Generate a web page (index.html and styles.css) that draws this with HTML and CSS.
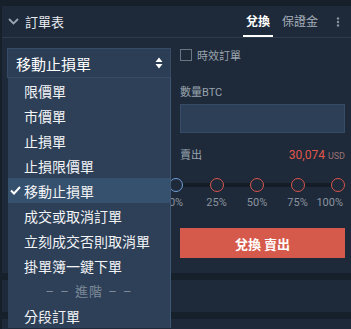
FILE: index.html
```html
<!DOCTYPE html>
<html lang="zh-Hant">
<head>
  <meta charset="UTF-8" />
  <meta name="viewport" content="width=device-width, initial-scale=1" />
  <title>訂單表</title>
  <link rel="stylesheet" href="styles.css">
</head>
<body>
  <div class="panel">
    <div class="panel-header">
      <div class="panel-title">
        <svg class="chevron" width="11" height="7" viewBox="0 0 11 7"><path d="M1 1l4.5 4.5L10 1" fill="none" stroke="#9aa5b1" stroke-width="1.8"/></svg>
        <span>訂單表</span>
      </div>
      <div class="tabs">
        <span class="tab active">兌換</span>
        <span class="tab">保證金</span>
        <svg class="more" width="4" height="10" viewBox="0 0 4 10"><circle cx="2" cy="1.5" r="1.2" fill="#8a949f"/><circle cx="2" cy="5" r="1.2" fill="#8a949f"/><circle cx="2" cy="8.5" r="1.2" fill="#8a949f"/></svg>
      </div>
    </div>

    <div class="order-body">
      <div class="col-left">
        <div class="select-box">
          <span>移動止損單</span>
          <svg width="8" height="12" viewBox="0 0 8 12"><path d="M4 0.5L7.5 5H0.5z M4 11.5L0.5 7H7.5z" fill="#fff"/></svg>
        </div>

        <!-- menú desplegado sobre el contenido -->
        <ul class="dropdown">
          <li>限價單</li>
          <li>市價單</li>
          <li>止損單</li>
          <li>止損限價單</li>
          <li class="selected">
            <svg class="check" width="11" height="9" viewBox="0 0 11 9"><path d="M1 4.5l3 3L10 1" fill="none" stroke="#fff" stroke-width="2"/></svg>
            移動止損單
          </li>
          <li>成交或取消訂單</li>
          <li>立刻成交否則取消單</li>
          <li>掛單簿一鍵下單</li>
          <li class="group">– – 進階 – –</li>
          <li>分段訂單</li>
        </ul>
      </div>

      <div class="col-right">
        <label class="check-row">
          <span class="checkbox"></span>
          <span>時效訂單</span>
        </label>

        <div class="field-label">數量BTC</div>
        <div class="input-box"></div>

        <div class="total-row">
          <span>賣出</span>
          <span class="price">30,074 <small>USD</small></span>
        </div>

        <div class="slider">
          <div class="track"></div>
          <div class="stops">
            <div class="stop first"><span class="dot"></span><span class="pct">0%</span></div>
            <div class="stop"><span class="dot"></span><span class="pct">25%</span></div>
            <div class="stop"><span class="dot"></span><span class="pct">50%</span></div>
            <div class="stop"><span class="dot"></span><span class="pct">75%</span></div>
            <div class="stop last"><span class="dot"></span><span class="pct">100%</span></div>
          </div>
        </div>

        <button type="button" class="sell-btn">兌換 賣出</button>
      </div>
    </div>

    <div class="band"></div>
    <div class="section"></div>
    <div class="band"></div>
    <div class="section last"></div>
  </div>
</body>
</html>
```

FILE: styles.css
```css
/* Reset básico */
* {
  box-sizing: border-box;
  margin: 0;
  padding: 0;
}

body {
  width: 351px;
  height: 329px;
  overflow: hidden;
  background: #16202b;
  padding: 6px 0 0 2px;
  font-family: Roboto, "Noto Sans CJK TC", sans-serif;
  color: #e8ebef;
}

.panel {
  background: #1e2a3a;
  height: 100%;
}

.panel-header {
  height: 32px;
  display: flex;
  align-items: center;
  justify-content: space-between;
  border-bottom: 1px solid #2e3b4c;
  padding: 0 11px 0 6px;
}

.panel-title {
  display: flex;
  align-items: center;
  gap: 6px;
  font-size: 13px;
}

.tabs {
  display: flex;
  align-items: center;
  height: 100%;
}

.tab {
  font-size: 12px;
  color: #a6afb9;
  height: 100%;
  display: flex;
  align-items: center;
  margin-left: 6px;
  padding: 0 3px;
  border-bottom: 2px solid transparent;
}

.tab.active {
  color: #fff;
  font-weight: 700;
  border-bottom-color: #fff;
}

.more {
  margin-left: 15px;
}

.order-body {
  display: flex;
  gap: 9px;
  padding: 10px 6px 0 5px;
  height: 235px;
}

.col-left {
  width: 164px;
  position: relative;
}

.select-box {
  height: 30px;
  background: #2c3e55;
  border: 1px solid #364b66;
  display: flex;
  align-items: center;
  justify-content: space-between;
  padding: 0 7px 0 8px;
  font-size: 15px;
  color: #fff;
}

.dropdown {
  position: absolute;
  top: 30px;
  left: 1px;
  width: 163px;
  list-style: none;
  background: #2e4058;
  border-right: 1px solid #3f5875;
  z-index: 2;
}

.dropdown li {
  height: 25px;
  display: flex;
  align-items: center;
  padding-left: 16px;
  font-size: 14px;
  color: #f2f4f6;
  position: relative;
}

.dropdown li.selected {
  background: #36516e;
}

.dropdown li.group {
  justify-content: center;
  padding-left: 0;
  color: #7d8a99;
  font-size: 13px;
  letter-spacing: 1px;
  word-spacing: 1px;
}

.check {
  position: absolute;
  left: 2px;
  top: 8px;
}

.col-right {
  flex: 1;
  display: flex;
  flex-direction: column;
}

.check-row {
  display: flex;
  align-items: center;
  gap: 5px;
  font-size: 11px;
  color: #9aa3ad;
  height: 13px;
}

.checkbox {
  width: 12px;
  height: 12px;
  border: 1px solid #6b7683;
}

.field-label {
  font-size: 11px;
  color: #9aa3ad;
  margin-top: 22px;
}

.input-box {
  height: 29px;
  margin-top: 5px;
  background: #2c3f57;
  border: 1px solid #364b66;
}

.total-row {
  display: flex;
  justify-content: space-between;
  align-items: baseline;
  margin-top: 13px;
  font-size: 11px;
  color: #9aa3ad;
}

.price {
  color: #e0574a;
  font-size: 12px;
}

.price small {
  font-size: 9px;
  color: #9a7272;
}

.slider {
  position: relative;
  margin: 16px 0 0 -11px;
}

.track {
  position: absolute;
  left: 0;
  right: 0;
  top: 5px;
  height: 4px;
  background: #141d27;
}

.stops {
  display: flex;
  justify-content: space-between;
  position: relative;
}

.stop {
  display: flex;
  flex-direction: column;
  align-items: center;
  width: 14px;
  gap: 4px;
}

.dot {
  width: 14px;
  height: 14px;
  border-radius: 50%;
  border: 1.5px solid #d9544a;
  background: #1e2a3a;
}

.stop.first .dot {
  border-color: #6f9fd8;
}

.pct {
  font-size: 11px;
  color: #8a939e;
  white-space: nowrap;
}

.stop.last .pct {
  align-self: flex-end;
  margin-right: 2px;
}

.sell-btn {
  margin-top: 19px;
  height: 30px;
  border: none;
  background: #d65a4c;
  color: #fff;
  font-family: inherit;
  font-size: 13px;
  font-weight: 700;
}

.band {
  height: 7px;
  background: #16202b;
}

.section {
  height: 32px;
}

.section.last {
  height: 9px;
}
```
